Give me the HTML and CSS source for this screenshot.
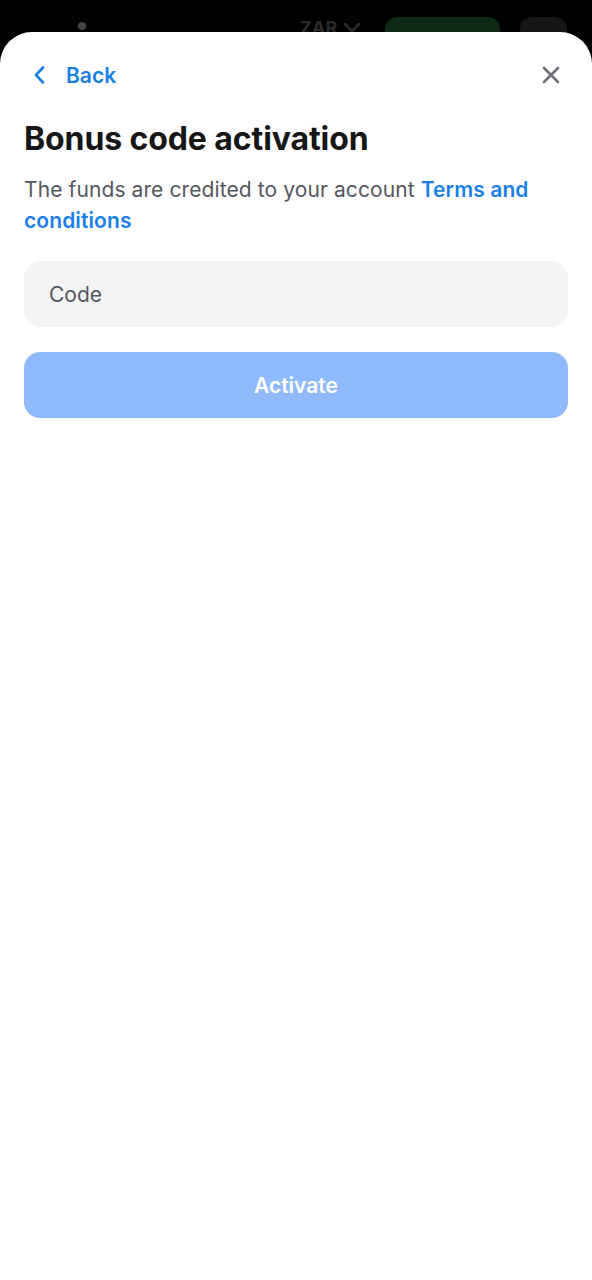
FILE: index.html
```html
<!DOCTYPE html>
<html lang="en">
<head>
    <meta charset="UTF-8">
    <meta name="viewport" content="width=device-width, initial-scale=1.0">
    <title>Bonus code activation</title>
    <link rel="stylesheet" href="styles.css">
</head>
<body>
    <header class="topo">
        <span class="ponto"></span>
        <span class="moeda">ZAR
            <svg width="18" height="12" viewBox="0 0 18 12"><path d="M2 2l7 7 7-7" fill="none" stroke="#2b2b2b" stroke-width="2.5" stroke-linecap="round" stroke-linejoin="round"/></svg>
        </span>
        <span class="deposito"></span>
        <span class="perfil"></span>
    </header>
    <main class="folha">
        <nav class="barra">
            <a href="#" class="voltar">
                <svg width="12" height="18" viewBox="0 0 12 18"><path d="M9 1.5L2 9l7 7.5" fill="none" stroke="currentColor" stroke-width="2.6" stroke-linecap="round" stroke-linejoin="round"/></svg>
                <span>Back</span>
            </a>
            <a href="#" class="fechar">
                <svg width="18" height="18" viewBox="0 0 18 18"><path d="M2 2l14 14M16 2L2 16" fill="none" stroke="currentColor" stroke-width="2.6" stroke-linecap="round"/></svg>
            </a>
        </nav>
        <h1>Bonus code activation</h1>
        <p class="texto">The funds are credited to your account <a href="#">Terms and conditions</a></p>
        <form class="form-codigo">
            <input type="text" placeholder="Code">
            <button type="submit">Activate</button>
        </form>
    </main>
</body>
</html>
```

FILE: styles.css
```css
:root {
    --azul: #1a7fe8;
    --cinza: #55575e;
    --campo: #f4f4f5;
}

* {
    font-family: Inter, "Noto Sans", sans-serif;
    padding: 0px;
    margin: 0px;
    box-sizing: border-box;
}

body {
    background-color: #000;
}

.topo {
    height: 32px;
    overflow: hidden;
    display: flex;
    align-items: flex-start;
}

.ponto {
    width: 8px;
    height: 8px;
    border-radius: 50%;
    background-color: #444;
    margin: 22px 0 0 78px;
}

.moeda {
    display: flex;
    align-items: center;
    gap: 6px;
    color: #2b2b2b;
    font-size: 18px;
    font-weight: 700;
    margin: 17px 0 0 214px;
}

.deposito {
    width: 115px;
    height: 40px;
    border-radius: 12px;
    background-color: #0f2a14;
    margin: 17px 0 0 24px;
}

.perfil {
    width: 47px;
    height: 40px;
    border-radius: 12px;
    background-color: #161616;
    margin: 17px 0 0 20px;
}

.folha {
    background-color: #fff;
    border-radius: 32px 32px 0 0;
    min-height: 1248px;
    padding: 0 24px;
}

.barra {
    height: 86px;
    display: flex;
    align-items: center;
    justify-content: space-between;
}

.voltar {
    display: flex;
    align-items: center;
    gap: 20px;
    margin-left: 10px;
    color: var(--azul);
    text-decoration: none;
    font-size: 21px;
    font-weight: 600;
}

.voltar svg {
    display: block;
}

.fechar {
    color: #6e7079;
    display: flex;
    margin-right: 8px;
}

h1 {
    font-size: 32px;
    font-weight: 700;
    color: #161616;
    letter-spacing: -0.1px;
    line-height: 40px;
    margin-top: 1px;
}

.texto {
    color: var(--cinza);
    font-size: 21px;
    letter-spacing: 0.1px;
    line-height: 31px;
    margin-top: 15px;
}

.texto a {
    color: var(--azul);
    font-weight: 600;
    text-decoration: none;
}

.form-codigo {
    display: flex;
    flex-direction: column;
    gap: 25px;
    margin-top: 25px;
}

.form-codigo input {
    height: 66px;
    border: none;
    border-radius: 16px;
    background-color: var(--campo);
    padding: 0 25px;
    font-size: 21px;
    color: #333;
}

.form-codigo input::placeholder {
    color: #55575e;
}

.form-codigo button {
    height: 66px;
    border: none;
    border-radius: 16px;
    background-color: #8fbbfc;
    color: #fff;
    font-size: 21px;
    font-weight: 600;
}
```
